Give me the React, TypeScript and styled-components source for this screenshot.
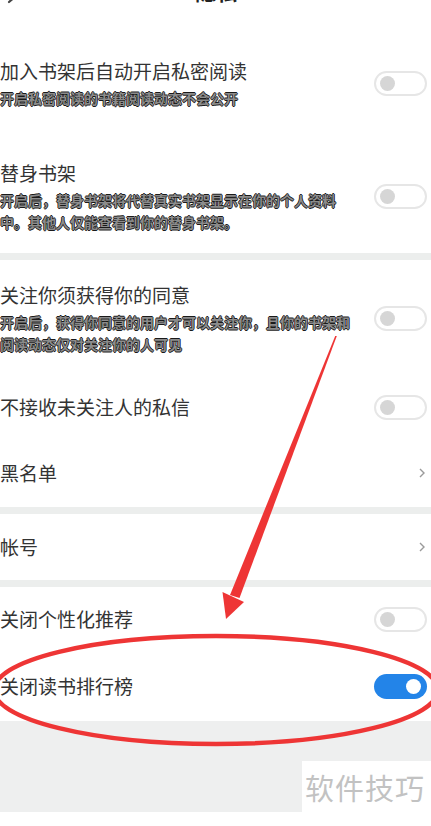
import styled, { createGlobalStyle } from 'styled-components';

const GlobalStyle = createGlobalStyle`
  html, body {
    margin: 0;
    padding: 0;
    background: #ffffff;
  }
  body {
    font-family: 'Noto Sans CJK SC', 'Noto Sans', sans-serif;
  }
`;

type SwitchRow = {
  kind: 'switch';
  title: string;
  lines?: string[];
  on?: boolean;
  height: number;
};
type LinkRow = { kind: 'link'; title: string; height: number };
type Row = SwitchRow | LinkRow;

const sections: Row[][] = [
  [
    {
      kind: 'switch',
      title: '加入书架后自动开启私密阅读',
      lines: ['开启私密阅读的书籍阅读动态不会公开'],
      height: 112,
    },
    {
      kind: 'switch',
      title: '替身书架',
      lines: ['开启后，替身书架将代替真实书架显示在你的个人资料', '中。其他人仅能查看到你的替身书架。'],
      height: 114,
    },
  ],
  [
    {
      kind: 'switch',
      title: '关注你须获得你的同意',
      lines: ['开启后，获得你同意的用户才可以关注你，且你的书架和', '阅读动态仅对关注你的人可见'],
      height: 116,
    },
    { kind: 'switch', title: '不接收未关注人的私信', height: 62 },
    { kind: 'link', title: '黑名单', height: 69 },
  ],
  [{ kind: 'link', title: '帐号', height: 66 }],
  [
    { kind: 'switch', title: '关闭个性化推荐', height: 64 },
    { kind: 'switch', title: '关闭读书排行榜', on: true, height: 70 },
  ],
];

export default function App() {
  return (
    <>
      <GlobalStyle />
      <StyledPage>
        <StyledHeader>
          <svg width="12" height="14" viewBox="0 0 12 14">
            <path d="M10 1 L3 7" stroke="#444" strokeWidth="2.2" fill="none" strokeLinecap="round" />
          </svg>
          <span className="title">隐私</span>
        </StyledHeader>

        {sections.map((rows, si) => (
          <StyledSection key={si} $first={si === 0}>
            {rows.map((row) => (
              <StyledRow key={row.title} $height={row.height}>
                <div className="text">
                  <div className="title">{row.title}</div>
                  {row.kind === 'switch' && row.lines && (
                    <StyledSubtitle>
                      {row.lines.map((l) => (
                        <div key={l}>{l}</div>
                      ))}
                    </StyledSubtitle>
                  )}
                </div>
                {row.kind === 'switch' ? (
                  <StyledSwitch $on={!!row.on}>
                    <span className="knob" />
                  </StyledSwitch>
                ) : (
                  <StyledChevron width="8" height="12" viewBox="0 0 8 12">
                    <path d="M2 2 L6 6 L2 10" stroke="#9a9a9a" strokeWidth="1.4" fill="none" />
                  </StyledChevron>
                )}
              </StyledRow>
            ))}
          </StyledSection>
        ))}

        <StyledFooter>
          <StyledWatermark>软件技巧</StyledWatermark>
        </StyledFooter>

        <StyledOverlay width="431" height="826" viewBox="0 0 431 826">
          <polygon points="335.2,336 336.8,336 239.5,598 230,595" fill="#ee3535" />
          <polygon points="222.5,592 244,602 226,619" fill="#ee3535" />
          <ellipse cx="216" cy="690" rx="222" ry="54" fill="none" stroke="#ee3535" strokeWidth="4.5" />
        </StyledOverlay>
      </StyledPage>
    </>
  );
}

const StyledPage = styled.div`
  position: relative;
  width: 431px;
  height: 826px;
  overflow: hidden;
  background: #ffffff;
  display: flex;
  flex-direction: column;
`;

const StyledHeader = styled.div`
  height: 52px;
  margin-top: -25px;
  flex-shrink: 0;
  display: flex;
  align-items: flex-start;
  padding: 0 6px;
  position: relative;
  box-sizing: border-box;

  svg {
    margin-top: 20px;
  }

  span.title {
    position: absolute;
    left: 195px;
    top: 3px;
    line-height: 26px;
    font-size: 21px;
    font-weight: 700;
    color: #222;
  }
`;

const StyledSection = styled.div<{ $first: boolean }>`
  background: #ffffff;
  display: flex;
  flex-direction: column;
  flex-shrink: 0;
  border-top: ${(p) => (p.$first ? 'none' : '7px solid #eceeed')};
`;

const StyledRow = styled.div<{ $height: number }>`
  height: ${(p) => p.$height}px;
  display: flex;
  align-items: center;
  justify-content: space-between;
  padding: 0 4px 0 0;
  box-sizing: border-box;

  div.text {
    display: flex;
    flex-direction: column;
  }

  div.title {
    font-size: 19px;
    line-height: 26px;
    color: #333;
    white-space: nowrap;
  }
`;

const StyledSubtitle = styled.div`
  margin-top: 3px;
  font-size: 14px;
  line-height: 22px;
  font-weight: 700;
  color: #8c8c8c;
  white-space: nowrap;
  text-shadow: 0.8px 0 #1a1a1a, -0.8px 0 #1a1a1a, 0 0.8px #1a1a1a, 0 -0.8px #1a1a1a;
`;

const StyledSwitch = styled.div<{ $on: boolean }>`
  width: 53px;
  height: 25px;
  flex-shrink: 0;
  border-radius: 13px;
  box-sizing: border-box;
  border: ${(p) => (p.$on ? 'none' : '2px solid #e6e6e6')};
  background: ${(p) => (p.$on ? '#2384e8' : '#ffffff')};
  display: flex;
  align-items: center;
  justify-content: ${(p) => (p.$on ? 'flex-end' : 'flex-start')};
  padding: 0 ${(p) => (p.$on ? '6px' : '4px')};

  span.knob {
    width: 15px;
    height: 15px;
    border-radius: 50%;
    background: ${(p) => (p.$on ? '#ffffff' : '#d6d6d6')};
  }
`;

const StyledChevron = styled.svg`
  margin-right: 1px;
  flex-shrink: 0;
`;

const StyledFooter = styled.div`
  flex: 0 0 91px;
  background: #eeefef;
  display: flex;
  justify-content: flex-end;
  align-items: flex-end;
`;

const StyledWatermark = styled.div`
  width: 129px;
  height: 51px;
  background: #ffffff;
  display: flex;
  align-items: center;
  padding-left: 3px;
  box-sizing: border-box;
  font-size: 29px;
  color: #c2c2c2;
  letter-spacing: 1px;
`;

const StyledOverlay = styled.svg`
  position: absolute;
  left: 0;
  top: 0;
  pointer-events: none;
`;
